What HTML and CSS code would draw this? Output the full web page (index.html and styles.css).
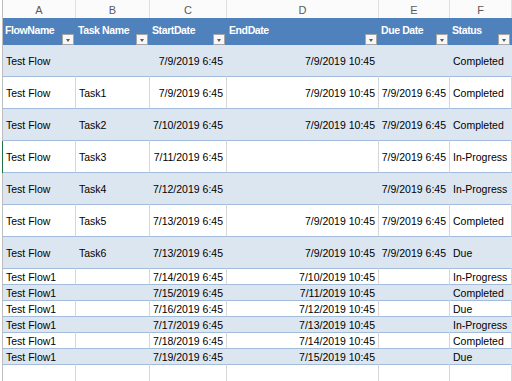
FILE: index.html
```html
<!DOCTYPE html>
<html>
<head>
<meta charset="utf-8">
<link rel="stylesheet" href="styles.css">
</head>
<body>
<div class="sheet">
  <div class="row letters">
    <div class="cell">A</div><div class="cell">B</div><div class="cell">C</div><div class="cell">D</div><div class="cell">E</div><div class="cell">F</div>
  </div>
  <div class="row head">
    <div class="cell">FlowName<span class="filter"></span></div>
    <div class="cell">Task Name<span class="filter"></span></div>
    <div class="cell">StartDate<span class="filter"></span></div>
    <div class="cell">EndDate<span class="filter"></span></div>
    <div class="cell">Due Date<span class="filter"></span></div>
    <div class="cell">Status<span class="filter"></span></div>
  </div>

  <div class="row tall band"><div class="cell">Test Flow</div><div class="cell"></div><div class="cell num">7/9/2019 6:45</div><div class="cell num">7/9/2019 10:45</div><div class="cell num"></div><div class="cell">Completed</div></div>
  <div class="row tall"><div class="cell">Test Flow</div><div class="cell">Task1</div><div class="cell num">7/9/2019 6:45</div><div class="cell num">7/9/2019 10:45</div><div class="cell num">7/9/2019 6:45</div><div class="cell">Completed</div></div>
  <div class="row tall band"><div class="cell">Test Flow</div><div class="cell">Task2</div><div class="cell num">7/10/2019 6:45</div><div class="cell num">7/9/2019 10:45</div><div class="cell num">7/9/2019 6:45</div><div class="cell">Completed</div></div>
  <div class="row tall active"><div class="cell">Test Flow</div><div class="cell">Task3</div><div class="cell num">7/11/2019 6:45</div><div class="cell num"></div><div class="cell num">7/9/2019 6:45</div><div class="cell">In-Progress</div></div>
  <div class="row tall band"><div class="cell">Test Flow</div><div class="cell">Task4</div><div class="cell num">7/12/2019 6:45</div><div class="cell num"></div><div class="cell num">7/9/2019 6:45</div><div class="cell">In-Progress</div></div>
  <div class="row tall"><div class="cell">Test Flow</div><div class="cell">Task5</div><div class="cell num">7/13/2019 6:45</div><div class="cell num">7/9/2019 10:45</div><div class="cell num">7/9/2019 6:45</div><div class="cell">Completed</div></div>
  <div class="row tall band"><div class="cell">Test Flow</div><div class="cell">Task6</div><div class="cell num">7/13/2019 6:45</div><div class="cell num">7/9/2019 10:45</div><div class="cell num">7/9/2019 6:45</div><div class="cell">Due</div></div>

  <div class="row short"><div class="cell">Test Flow1</div><div class="cell"></div><div class="cell num">7/14/2019 6:45</div><div class="cell num">7/10/2019 10:45</div><div class="cell num"></div><div class="cell">In-Progress</div></div>
  <div class="row short band"><div class="cell">Test Flow1</div><div class="cell"></div><div class="cell num">7/15/2019 6:45</div><div class="cell num">7/11/2019 10:45</div><div class="cell num"></div><div class="cell">Completed</div></div>
  <div class="row short"><div class="cell">Test Flow1</div><div class="cell"></div><div class="cell num">7/16/2019 6:45</div><div class="cell num">7/12/2019 10:45</div><div class="cell num"></div><div class="cell">Due</div></div>
  <div class="row short band"><div class="cell">Test Flow1</div><div class="cell"></div><div class="cell num">7/17/2019 6:45</div><div class="cell num">7/13/2019 10:45</div><div class="cell num"></div><div class="cell">In-Progress</div></div>
  <div class="row short"><div class="cell">Test Flow1</div><div class="cell"></div><div class="cell num">7/18/2019 6:45</div><div class="cell num">7/14/2019 10:45</div><div class="cell num"></div><div class="cell">Completed</div></div>
  <div class="row short band"><div class="cell">Test Flow1</div><div class="cell"></div><div class="cell num">7/19/2019 6:45</div><div class="cell num">7/15/2019 10:45</div><div class="cell num"></div><div class="cell">Due</div></div>

  <div class="row empty"><div class="cell"></div><div class="cell"></div><div class="cell"></div><div class="cell"></div><div class="cell"></div><div class="cell"></div></div>
</div>
</body>
</html>
```

FILE: styles.css
```css
html, body {
  margin: 0;
  padding: 0;
  background: #ffffff;
  width: 512px;
  height: 381px;
  overflow: hidden;
}

.sheet {
  font-family: "Liberation Sans", Arial, sans-serif;
  font-size: 10.5px;
  color: #000;
  padding-left: 2px;
}

.row {
  display: grid;
  grid-template-columns: 73px 74px 77px 152px 71px 62px;
  border-left: 1px solid #bdbdbd;
}

.cell {
  box-sizing: border-box;
  border-right: 1px solid #d6d6d6;
  white-space: nowrap;
  overflow: hidden;
  padding: 0 3px;
  display: flex;
  align-items: center;
}

.num {
  justify-content: flex-end;
}

.letters {
  height: 18px;
  background: #fbfbfb;
}
.letters .cell {
  justify-content: center;
  color: #5a5a5a;
  font-size: 11px;
  border-right-color: #e0e0e0;
  padding-top: 1px;
}

.head {
  height: 27px;
  background: #4f81bd;
}
.head .cell {
  position: relative;
  align-items: flex-start;
  padding-top: 6px;
  padding-left: 2px;
  color: #ffffff;
  font-weight: bold;
  letter-spacing: -0.4px;
  border-right-color: #4f81bd;
}

.filter {
  position: absolute;
  right: 1px;
  bottom: 0;
  width: 12px;
  height: 11px;
  box-sizing: border-box;
  background: #f7f7f7;
  border: 1px solid #a6a6a6;
}
.filter::after {
  content: "";
  position: absolute;
  left: 3px;
  top: 4px;
  width: 0;
  height: 0;
  border-left: 2.5px solid transparent;
  border-right: 2.5px solid transparent;
  border-top: 3px solid #595959;
}

.tall {
  height: 32px;
}
.short {
  height: 16px;
}
.empty {
  height: 16px;
}
.tall .cell,
.short .cell {
  border-bottom: 1px solid #a3bcdc;
}

.band {
  background: #dce6f1;
}
.band .cell {
  border-right-color: #dce6f1;
}

.active {
  border-left-color: #217346;
}
```
